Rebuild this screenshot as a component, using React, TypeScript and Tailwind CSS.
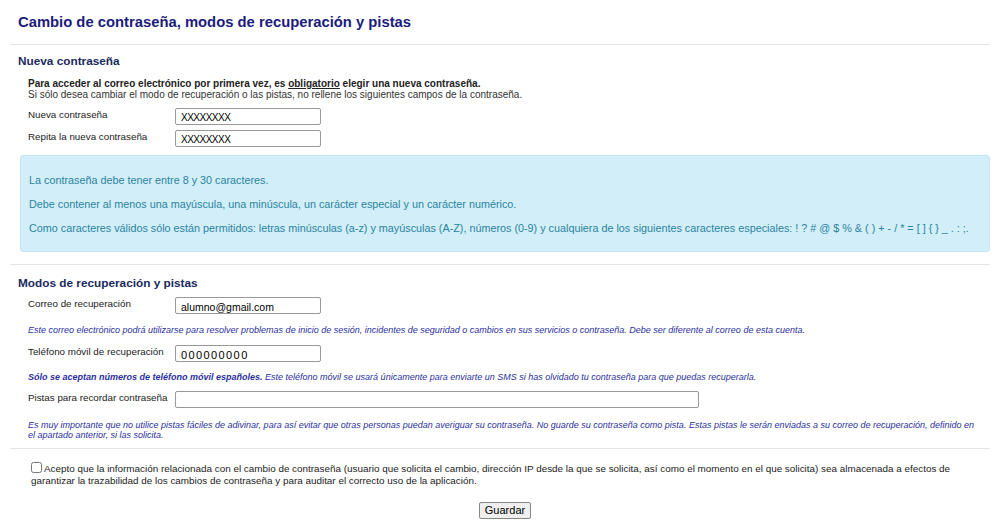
const rules = [
  "La contraseña debe tener entre 8 y 30 caracteres.",
  "Debe contener al menos una mayúscula, una minúscula, un carácter especial y un carácter numérico.",
  "Como caracteres válidos sólo están permitidos: letras minúsculas (a-z) y mayúsculas (A-Z), números (0-9) y cualquiera de los siguientes caracteres especiales: ! ? # @ $ % & ( ) + - / * = [ ] { } _ . : ;.",
];

const Field = ({
  label,
  value,
  wide,
  valueClass = "text-[10.5px]",
}: {
  label: string;
  value: string;
  wide?: boolean;
  valueClass?: string;
}) => (
  <div className="flex items-start">
    <label className="w-[147px] whitespace-nowrap pt-[1px] text-[9.8px] leading-[12px] text-[#222]">{label}</label>
    <input
      readOnly
      value={value}
      className={`h-[17px] ${wide ? "w-[524px]" : "w-[146px]"} ${valueClass} rounded-[2px] border border-[#999] bg-white px-[5px] pt-[2px] text-black outline-none`}
    />
  </div>
);

const Hint = ({ children }: { children: React.ReactNode }) => (
  <p className="pl-[18px] pr-[8px] text-[9px] italic leading-[10px] text-[#2b2f9e]">{children}</p>
);

export default function App() {
  return (
    <div className="min-h-[531px] w-[1000px] bg-white font-['Liberation_Sans',Arial,sans-serif] text-[#222]">
      <h1 className="px-[18px] pt-[13px] pb-[12px] text-[14.8px] font-bold leading-[19px] text-[#1b1b7c]">
        Cambio de contraseña, modos de recuperación y pistas
      </h1>

      {/* Nueva contraseña */}
      <section className="mx-[10px] border-t border-[#e5e5e5] pt-[8px] pb-[12px]">
        <h2 className="px-[8px] text-[11.8px] font-bold leading-[16px] text-[#1b2a5e]">Nueva contraseña</h2>
        <div className="mt-[9px] px-[18px] text-[10px] leading-[11px]">
          <p className="font-bold text-[#222]">
            Para acceder al correo electrónico por primera vez, es <span className="underline">obligatorio</span> elegir
            una nueva contraseña.
          </p>
          <p className="text-[#333]">
            Si sólo desea cambiar el modo de recuperación o las pistas, no rellene los siguientes campos de la contraseña.
          </p>
        </div>
        <div className="mt-[8px] flex flex-col gap-[5px] px-[18px]">
          <Field label="Nueva contraseña" value="XXXXXXXX" valueClass="text-[10px] tracking-[-0.5px]" />
          <Field label="Repita la nueva contraseña" value="XXXXXXXX" valueClass="text-[10px] tracking-[-0.5px]" />
        </div>
        <div className="mt-[8px] ml-[10px] flex h-[97px] flex-col justify-center gap-[10px] rounded-[3px] border border-[#c4e6f2] bg-[#d2eef8] pl-[8px] pr-[4px] text-[10.8px] leading-[14px] text-[#2b84a0]">
          {rules.map((r) => (
            <p key={r} className="whitespace-nowrap">
              {r}
            </p>
          ))}
        </div>
      </section>

      {/* Modos de recuperación */}
      <section className="mx-[10px] border-t border-[#e5e5e5] pt-[10px] pb-[8px]">
        <h2 className="px-[8px] text-[11.8px] font-bold leading-[16px] text-[#1b2a5e]">Modos de recuperación y pistas</h2>
        <div className="mt-[6px] flex flex-col">
          <div className="px-[18px]">
            <Field label="Correo de recuperación" value="alumno@gmail.com" />
          </div>
          <div className="mt-[11px]">
            <Hint>
              Este correo electrónico podrá utilizarse para resolver problemas de inicio de sesión, incidentes de seguridad
              o cambios en sus servicios o contraseña. Debe ser diferente al correo de esta cuenta.
            </Hint>
          </div>
          <div className="mt-[10px] px-[18px]">
            <Field label="Teléfono móvil de recuperación" value="000000000" valueClass="text-[11px] tracking-[1.4px]" />
          </div>
          <div className="mt-[10px]">
            <Hint>
              <b>Sólo se aceptan números de teléfono móvil españoles.</b> Este teléfono móvil se usará únicamente para
              enviarte un SMS si has olvidado tu contraseña para que puedas recuperarla.
            </Hint>
          </div>
          <div className="mt-[9px] px-[18px]">
            <Field label="Pistas para recordar contraseña" value="" wide />
          </div>
          <div className="mt-[12px]">
            <Hint>
              Es muy importante que no utilice pistas fáciles de adivinar, para así evitar que otras personas puedan
              averiguar su contraseña. No guarde su contraseña como pista. Estas pistas le serán enviadas a su correo de
              recuperación, definido en el apartado anterior, si las solicita.
            </Hint>
          </div>
        </div>
      </section>

      {/* Aceptación */}
      <section className="mx-[10px] border-t border-[#e5e5e5] pt-[13px]">
        <p className="pl-[21px] pr-[20px] text-[9.9px] leading-[12px] text-[#222]">
          <input type="checkbox" className="mr-[2px] h-[11px] w-[11px] align-[-1px]" />
          Acepto que la información relacionada con el cambio de contraseña (usuario que solicita el cambio, dirección IP
          desde la que se solicita, así como el momento en el que solicita) sea almacenada a efectos de garantizar la
          trazabilidad de los cambios de contraseña y para auditar el correcto uso de la aplicación.
        </p>
        <div className="mt-[15px] ml-[10px] flex justify-center">
          <button className="h-[17px] rounded-[2px] border border-[#888] bg-[#efefef] px-[5px] text-[11px] leading-[13px] text-black">
            Guardar
          </button>
        </div>
      </section>
    </div>
  );
}
